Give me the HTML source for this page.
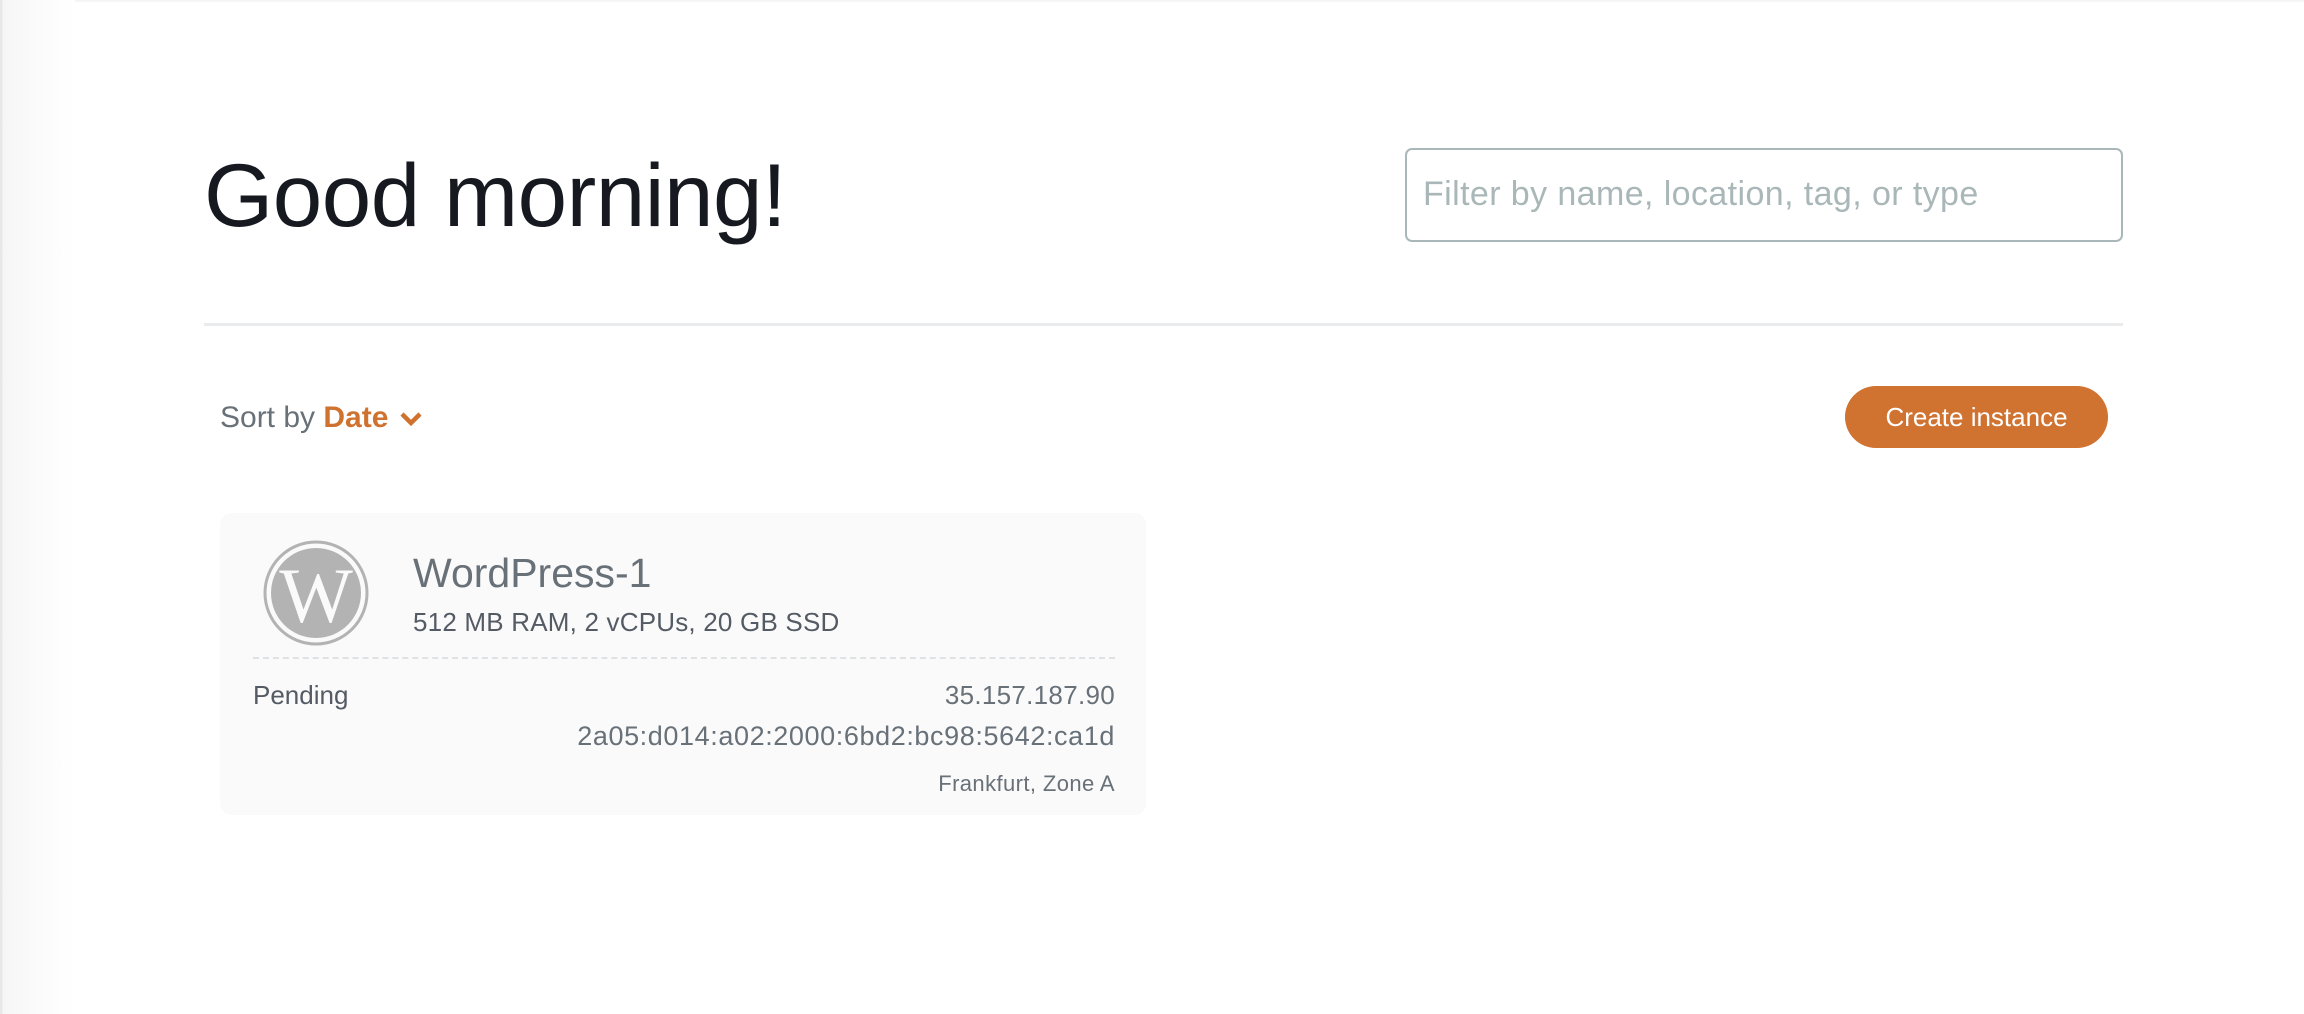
<!DOCTYPE html>
<html><head><meta charset="utf-8"><style>
html,body{margin:0;padding:0;width:2304px;height:1014px;overflow:hidden;background:#fff;font-family:"Liberation Sans",sans-serif;}
.shadow{position:absolute;left:0;top:0;width:75px;height:1014px;background:linear-gradient(to right,#e8e8e8 0,#e8e8e8 2px,#f6f6f6 3px,#fbfbfb 40px,#fff 75px);}
.topline{position:absolute;left:0;top:0;width:2304px;height:3px;background:linear-gradient(#f2f2f2,#fff);}
h1{position:absolute;left:204px;top:140px;margin:0;font-weight:normal;font-size:89px;letter-spacing:-0.5px;color:#16191f;line-height:110px;}
.filter{position:absolute;left:1405px;top:148px;width:714px;height:90px;border:2px solid #aab7b8;border-radius:7px;box-sizing:content-box;}
.filter span{position:absolute;left:16px;top:25px;font-size:34px;letter-spacing:0.4px;color:#aab7b8;}
.divider{position:absolute;left:204px;top:323px;width:1919px;height:3px;background:#e9ebed;}
.sort{position:absolute;left:220px;top:401px;font-size:30px;color:#687078;}
.sort b{color:#d0722f;}
.btn{position:absolute;left:1845px;top:386px;width:263px;height:62px;border-radius:31px;background:#d07230;color:#fff;font-size:26px;line-height:62px;text-align:center;}
.card{position:absolute;left:220px;top:513px;width:926px;height:302px;background:#fafafa;border-radius:12px;}
.title{position:absolute;left:193px;top:37px;font-size:41px;color:#687078;}
.spec{position:absolute;left:193px;top:94px;font-size:26px;letter-spacing:0.2px;color:#545b64;}
.dash{position:absolute;left:33px;top:144px;width:862px;border-top:2px dashed #dfe2e4;}
.pend{position:absolute;left:33px;top:167px;font-size:26px;color:#545b64;}
.r{position:absolute;right:31px;text-align:right;color:#687078;}
</style></head><body>
<div class="topline"></div>
<div class="shadow"></div>
<h1>Good morning!</h1>
<div class="filter"><span>Filter by name, location, tag, or type</span></div>
<div class="divider"></div>
<div class="sort">Sort by <b>Date</b>&nbsp;<svg width="28" height="20" viewBox="0 0 28 20" style="vertical-align:middle"><path d="M5 5 L14 14 L23 5" stroke="#d0722f" stroke-width="4.5" fill="none"/></svg></div>
<div class="btn">Create instance</div>
<div class="card">
<svg style="position:absolute;left:42px;top:27px" width="108" height="108" viewBox="0 0 108 108">
<circle cx="54" cy="53" r="51" fill="none" stroke="#b3b3b3" stroke-width="3"/>
<circle cx="54" cy="53" r="45" fill="#b3b3b3"/>
<text x="54" y="82" text-anchor="middle" font-family="Liberation Serif,serif" font-size="78" fill="#fafafa">W</text>
</svg>
<div class="title">WordPress-1</div>
<div class="spec">512 MB RAM, 2 vCPUs, 20 GB SSD</div>
<div class="dash"></div>
<div class="pend">Pending</div>
<div class="r" style="top:167px;font-size:26px;letter-spacing:0.3px;">35.157.187.90</div>
<div class="r" style="top:208px;font-size:27px;letter-spacing:0.6px;">2a05:d014:a02:2000:6bd2:bc98:5642:ca1d</div>
<div class="r" style="top:258px;font-size:22px;letter-spacing:0.4px;">Frankfurt, Zone A</div>
</div>
</body></html>
